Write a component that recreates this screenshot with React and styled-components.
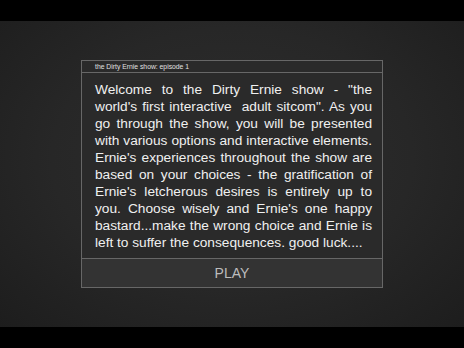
import React from "react";
import styled, { createGlobalStyle } from "styled-components";

const Global = createGlobalStyle`
  html, body { margin: 0; padding: 0; background: #000; }
  body { font-family: "Liberation Sans", Arial, sans-serif; }
`;

const Screen = styled.div`
  width: 464px;
  height: 348px;
  display: flex;
  flex-direction: column;
  background: #000;
  overflow: hidden;
`;

const Bar = styled.div`
  height: 21px;
  flex: none;
  background: #000;
`;

const Stage = styled.main`
  flex: 1;
  display: flex;
  align-items: center;
  justify-content: center;
  background: radial-gradient(ellipse at 50% 45%, #2e2e2e 0%, #272727 55%, #1d1d1d 100%);
`;

const Panel = styled.section`
  width: 300px;
  border: 1px solid #676767;
  background: #2a2a2a;
  display: flex;
  flex-direction: column;
  margin-bottom: 1px;
`;

const TitleBar = styled.div`
  height: 11px;
  border-bottom: 1px solid #676767;
  padding-left: 13px;
  font-size: 6.8px;
  line-height: 11px;
  color: #e0e0e0;
`;

const Body = styled.p`
  margin: 0;
  padding: 8px 10px 7px 13px;
  font-size: 13.7px;
  line-height: 17px;
  color: #f0f0f0;
  text-align: justify;
  white-space: pre-wrap;
`;

const PlayButton = styled.button`
  height: 29px;
  border: none;
  border-top: 1px solid #676767;
  background: #333333;
  color: #bdbdbd;
  font-family: "Liberation Sans", Arial, sans-serif;
  font-size: 14px;
  padding: 0;
  cursor: pointer;
`;

export default function App() {
  return (
    <>
      <Global />
      <Screen>
        <Bar />
        <Stage>
          <Panel>
            <TitleBar>the Dirty Ernie show: episode 1</TitleBar>
            <Body>
              {`Welcome to the Dirty Ernie show - "the world's first interactive  adult sitcom". As you go through the show, you will be presented with various options and interactive elements. Ernie's experiences throughout the show are based on your choices - the gratification of Ernie's letcherous desires is entirely up to you. Choose wisely and Ernie's one happy bastard...make the wrong choice and Ernie is left to suffer the consequences. good luck....`}
            </Body>
            <PlayButton>PLAY</PlayButton>
          </Panel>
        </Stage>
        <Bar />
      </Screen>
    </>
  );
}
